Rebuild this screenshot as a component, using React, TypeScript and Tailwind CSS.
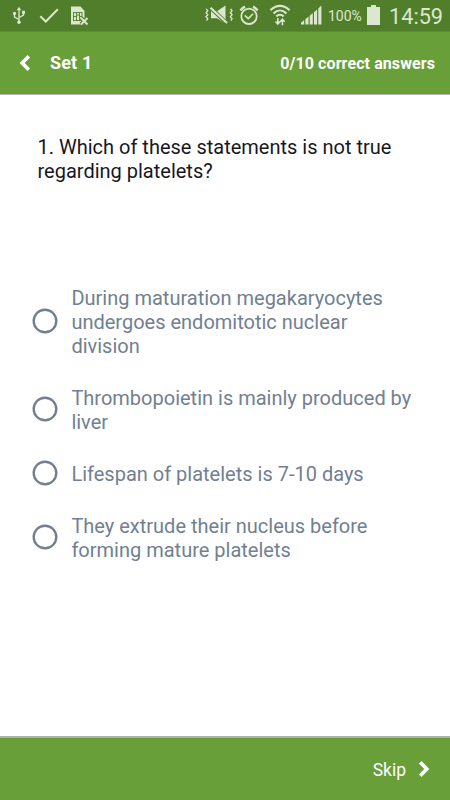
import { useState } from 'react';
import clsx from 'clsx';

interface Option {
  id: string;
  lines: string[];
}

const question = {
  lines: ['1. Which of these statements is not true', 'regarding platelets?'],
  options: [
    { id: 'a', lines: ['During maturation megakaryocytes', 'undergoes endomitotic nuclear', 'division'] },
    { id: 'b', lines: ['Thrombopoietin is mainly produced by', 'liver'] },
    { id: 'c', lines: ['Lifespan of platelets is 7-10 days'] },
    { id: 'd', lines: ['They extrude their nucleus before', 'forming mature platelets'] }
  ] as Option[]
};

function UsbIcon() {
  return (
    <svg width="14" height="20" viewBox="0 0 14 20" fill="none" stroke="currentColor" strokeWidth="1.3">
      <path d="M7 3v13M7 13.5 2.5 11V8M7 11.5l4.5-2.3V6.5" />
      <path d="M7 .8 9.2 4.3H4.8z" fill="currentColor" stroke="none" />
      <circle cx="7" cy="16.2" r="1.8" fill="currentColor" stroke="none" />
      <circle cx="2.5" cy="7.4" r="1.6" fill="currentColor" stroke="none" />
      <path d="M10 4.8h3v3h-3z" fill="currentColor" stroke="none" />
    </svg>
  );
}

function SimErrorIcon() {
  return (
    <svg width="19" height="20" viewBox="0 0 19 20">
      <path d="M1 .5h9.5L14.5 5v13.5H1z" fill="currentColor" />
      <path d="M3.5 6.5h8.5M3.5 14.5h8.5M3.5 10.5h3M6.5 9h3M9.5 10.5H12M3.5 6v9M6.5 6.5v8M9.5 6.5v8M12 6v9" fill="none" stroke="#517e2a" strokeWidth="0.9" />
      <path d="m11 12 6.5 6.5m0-6.5L11 18.5" stroke="#517e2a" strokeWidth="4" />
      <path d="m11 12 6.5 6.5m0-6.5L11 18.5" stroke="currentColor" strokeWidth="1.9" />
    </svg>
  );
}

function VibrateMuteIcon() {
  return (
    <svg width="30" height="20" viewBox="0 0 30 20">
      <path d="M7 6.2h6l8.5-5.7v18L13 13.3H7z" fill="currentColor" />
      <path d="M6 2.2 23 18.4" stroke="#517e2a" strokeWidth="4" />
      <path d="M6.5 2.7 23 18" stroke="currentColor" strokeWidth="2.2" />
      <path d="m2.2 3.8 1.6 2-1.8 2 1.8 2-1.8 2 1.8 2-1.3 1.8M26.5 3.8l1.6 2-1.8 2 1.8 2-1.8 2 1.8 2-1.3 1.8" fill="none" stroke="currentColor" strokeWidth="1.3" />
    </svg>
  );
}

function AlarmIcon() {
  return (
    <svg width="20" height="21" viewBox="0 0 20 21" fill="none" stroke="currentColor" strokeWidth="1.8">
      <circle cx="10" cy="11.3" r="7.7" />
      <path d="M1.4 5.4a13 13 0 0 1 4.6-3.7M14 1.7a13 13 0 0 1 4.6 3.7" strokeWidth="2.4" />
      <path d="m5.8 10.4 3.5 3.2 4.8-4.8" strokeWidth="1.6" />
    </svg>
  );
}

function WifiIcon() {
  return (
    <svg width="22" height="22" viewBox="0 0 22 22" fill="none" stroke="currentColor">
      <path d="M1.5 6.3C7 .4 15 .4 20.5 6.3M4.5 9.4c4-3.9 9-3.9 13 0M7.3 12.4c2.4-2.1 5-2.1 7.4 0" strokeWidth="2.1" />
      <path d="M8.8 14v6m-2.3-2.5 2.3 2.5 2.2-2.5M13.4 21.3V15m-2.2 2.7 2.2-2.6 2.3 2.6" strokeWidth="1.6" />
    </svg>
  );
}

function SignalIcon() {
  return (
    <svg width="21" height="20" viewBox="0 0 21 20" fill="currentColor">
      <path d="M0 17.8 3.2 15v4.5H0zM4.4 14.2l3.1-2.8v8.1H4.4zM8.7 10.7l3.1-2.8v11.6H8.7zM13 7.2l3.1-2.8v15.1H13zM17.3 3.5l3.1-3v19h-3.1z" />
    </svg>
  );
}

function StatusBar() {
  return (
    <div className="flex h-[31px] items-center bg-[#517e2a] text-[#dbe7cf]">
      <div className="ml-3 flex items-center">
        <UsbIcon />
        <svg width="20" height="16" viewBox="0 0 20 16" className="ml-[13px]" fill="none" stroke="currentColor" strokeWidth="2">
          <path d="m1.3 8.2 5.5 5.3L18.8 1.3" />
        </svg>
        <div className="ml-[11px]"><SimErrorIcon /></div>
      </div>
      <div className="ml-auto flex items-center">
        <VibrateMuteIcon />
        <div className="ml-[5px]"><AlarmIcon /></div>
        <div className="ml-[10px]"><WifiIcon /></div>
        <div className="ml-[10px]"><SignalIcon /></div>
        <span className="mt-[2px] ml-[6px] w-[35px] text-[14px] leading-none whitespace-nowrap">100%</span>
        <svg width="13" height="20" viewBox="0 0 13 20" className="ml-[4px]" fill="currentColor">
          <path d="M4 0h5v2h4v18H0V2h4z" />
        </svg>
        <span className="mt-[2px] mr-[7px] ml-[9px] w-[54px] text-[21.7px] leading-none whitespace-nowrap">14:59</span>
      </div>
    </div>
  );
}

function OptionRow({ option, selected, onSelect }: { option: Option; selected: boolean; onSelect: () => void }) {
  return (
    <button type="button" onClick={onSelect} className="flex items-center text-left">
      <svg width="26" height="26" viewBox="0 0 26 26" className="-mt-1 -mb-px shrink-0 text-[#718090]">
        <circle cx="13" cy="13" r="11.3" fill="none" stroke="currentColor" strokeWidth="2.4" />
        <circle cx="13" cy="13" r="6" className={clsx(selected ? 'fill-current' : 'fill-none')} />
      </svg>
      <span className="ml-[13.4px] text-[20px] leading-6 text-[#718090]">
        {option.lines.map((line) => (
          <span key={line} className="block whitespace-nowrap">{line}</span>
        ))}
      </span>
    </button>
  );
}

export default function App() {
  const [selected, setSelected] = useState<string | null>(null);

  return (
    <div className="flex h-[800px] w-[450px] flex-col overflow-hidden bg-white font-['Roboto',sans-serif]">
      <StatusBar />

      {/* Header */}
      <header className="flex h-[64px] items-center border-t border-b border-t-[#5c8c32] border-b-[#b4b2b8] bg-[#689f38] text-white">
        <svg width="12" height="18" viewBox="0 0 12 18" className="mb-px ml-[19px]" fill="none" stroke="currentColor" strokeWidth="3.6">
          <path d="M9.8 2.2 3.2 9l6.6 6.8" />
        </svg>
        <h1 className="mb-px ml-[19px] text-[18px] font-bold tracking-[0.15px]">Set 1</h1>
        <span className="mt-px mr-[15px] ml-auto text-[16px] font-bold tracking-[0.09px]">0/10 correct answers</span>
      </header>

      {/* Question */}
      <main className="flex-1">
        <h2 className="mt-[40px] ml-[37.5px] h-[151px] text-[20px] leading-6 text-[#17171f]">
          {question.lines.map((line) => (
            <span key={line} className="block whitespace-nowrap">{line}</span>
          ))}
        </h2>
        <div className="ml-8 flex flex-col gap-7">
          {question.options.map((option) => (
            <OptionRow
              key={option.id}
              option={option}
              selected={selected === option.id}
              onSelect={() => setSelected(option.id)}
            />
          ))}
        </div>
      </main>

      {/* Footer */}
      <footer className="flex h-[64px] items-center justify-end border-t-2 border-[#b0b2ac] bg-[#689f38] text-white">
        <button type="button" className="mr-[20px] flex items-center">
          <span className="mt-[2px] text-[17.5px]">Skip</span>
          <svg width="12" height="18" viewBox="0 0 12 18" className="ml-3" fill="none" stroke="currentColor" strokeWidth="3.6">
            <path d="M2.2 2.2 8.8 9l-6.6 6.8" />
          </svg>
        </button>
      </footer>
    </div>
  );
}
